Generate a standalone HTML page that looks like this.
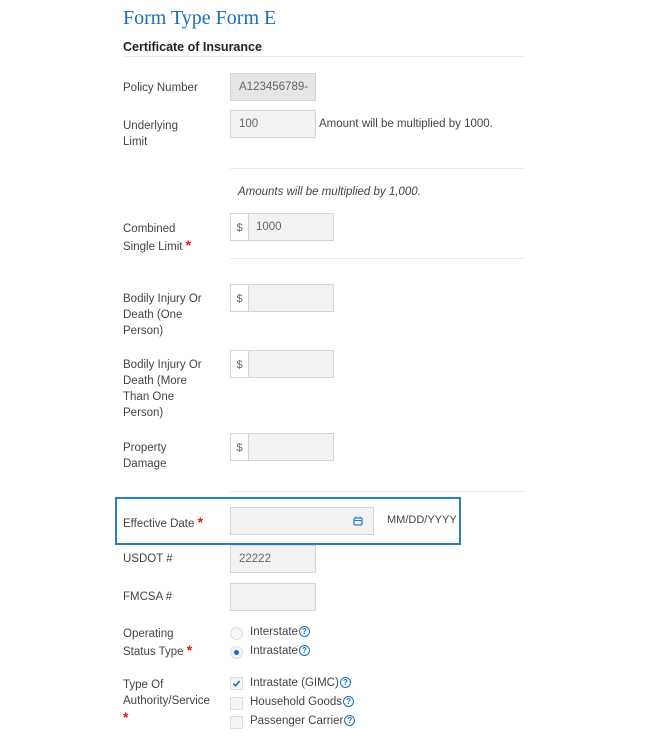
<!DOCTYPE html>
<html><head><meta charset="utf-8"><style>
body{margin:0;width:648px;height:744px;background:#fff;position:relative;overflow:hidden;font-family:"Liberation Sans",sans-serif;font-size:11.5px;color:#444}
.a{position:absolute;white-space:nowrap}
.lbl{position:absolute;left:123px;line-height:16px;color:#444}
.in{position:absolute;box-sizing:border-box;border:1px solid #d4d4d4;background:#f2f2f2;color:#666;padding-left:8px;font-size:11.5px;line-height:26px}
.hr{position:absolute;height:1px;background:#ebebeb}
.st{color:#e0141e;font-weight:bold;font-size:14px}
.q{display:inline-block;width:9px;height:9px;border:1.3px solid #1a6fb8;border-radius:50%;font-size:8px;line-height:9px;text-align:center;color:#1a6fb8;font-weight:bold;vertical-align:1px;margin-left:1px}
.cb{position:absolute;left:230px;width:13px;height:13px;box-sizing:border-box;border:1px solid #ddd;background:#f4f4f4}
.ad{position:absolute;box-sizing:border-box;border:1px solid #d4d4d4;height:28px;width:104px;background:#f2f2f2}
.ad span{position:absolute;left:0;top:0;width:17px;height:26px;background:#fff;border-right:1px solid #d4d4d4;text-align:center;line-height:28px;font-size:11px;color:#666}
.ad b{position:absolute;left:25px;top:0;line-height:26px;font-weight:normal;color:#666}
</style></head><body>
<div class="a" style="left:123px;top:7px;font-family:'Liberation Serif',serif;font-size:20px;color:#1a6fb8">Form Type Form E</div>
<div class="a" style="left:123px;top:40px;font-weight:bold;font-size:12.5px;color:#222">Certificate of Insurance</div>
<div class="hr" style="left:123px;top:56px;width:402px"></div>

<div class="lbl" style="top:80px">Policy Number</div>
<div class="in" style="left:230px;top:73px;width:86px;height:28px;background:#e6e6e6;overflow:hidden">A123456789-C</div>
<div class="lbl" style="top:118px">Underlying<br>Limit</div>
<div class="in" style="left:230px;top:110px;width:86px;height:28px">100</div>
<div class="a" style="left:319px;top:118px">Amount will be multiplied by 1000.</div>
<div class="hr" style="left:230px;top:168px;width:295px"></div>

<div class="a" style="left:238px;top:186px;font-style:italic">Amounts will be multiplied by 1,000.</div>
<div class="lbl" style="top:221px">Combined<br>Single Limit <span class="st">*</span></div>
<div class="ad" style="left:230px;top:213px"><span>$</span><b>1000</b></div>
<div class="hr" style="left:230px;top:258px;width:295px"></div>

<div class="lbl" style="top:291px">Bodily Injury Or<br>Death (One<br>Person)</div>
<div class="ad" style="left:230px;top:284px"><span>$</span></div>
<div class="lbl" style="top:357px">Bodily Injury Or<br>Death (More<br>Than One<br>Person)</div>
<div class="ad" style="left:230px;top:350px"><span>$</span></div>
<div class="lbl" style="top:440px">Property<br>Damage</div>
<div class="ad" style="left:230px;top:433px"><span>$</span></div>
<div class="hr" style="left:230px;top:491px;width:295px"></div>

<div class="a" style="left:115px;top:497px;width:346px;height:48px;box-sizing:border-box;border:2px solid #2a7fc4"></div>
<div class="lbl" style="top:514px">Effective Date <span class="st">*</span></div>
<div class="in" style="left:230px;top:507px;width:144px;height:28px"></div>
<svg class="a" style="left:353px;top:516px" width="10" height="10" viewBox="0 0 10 10"><rect x="1" y="2" width="8" height="7" rx="1" fill="none" stroke="#2a7fc4" stroke-width="1.2"/><line x1="1" y1="4.5" x2="9" y2="4.5" stroke="#2a7fc4"/><line x1="3" y1="0.5" x2="3" y2="2.5" stroke="#2a7fc4"/><line x1="7" y1="0.5" x2="7" y2="2.5" stroke="#2a7fc4"/></svg>
<div class="a" style="left:387px;top:514px;font-size:11px">MM/DD/YYYY</div>

<div class="lbl" style="top:551px">USDOT #</div>
<div class="in" style="left:230px;top:545px;width:86px;height:28px">22222</div>
<div class="lbl" style="top:589px">FMCSA #</div>
<div class="in" style="left:230px;top:583px;width:86px;height:28px"></div>

<div class="lbl" style="top:626px">Operating<br>Status Type <span class="st">*</span></div>
<div class="a" style="left:230px;top:627px;width:13px;height:13px;border-radius:50%;border:1px solid #ddd;background:#f6f6f6;box-sizing:border-box"></div>
<div class="a" style="left:250px;top:626px">Interstate<span class="q">?</span></div>
<div class="a" style="left:230px;top:646px;width:13px;height:13px;border-radius:50%;border:1px solid #ddd;background:#f6f6f6;box-sizing:border-box"><div style="position:absolute;left:3px;top:3px;width:5px;height:5px;border-radius:50%;background:#1a6fb8"></div></div>
<div class="a" style="left:250px;top:645px">Intrastate<span class="q">?</span></div>

<div class="lbl" style="top:677px">Type Of<br>Authority/Service<br><span class="st">*</span></div>
<div class="cb" style="top:677px"><svg width="11" height="11" viewBox="0 0 11 11" style="position:absolute;left:0;top:0"><path d="M2.5 5.5 L4.7 7.7 L8.7 3" stroke="#1a6fb8" stroke-width="1.6" fill="none"/></svg></div>
<div class="a" style="left:250px;top:677px">Intrastate (GIMC)<span class="q">?</span></div>
<div class="cb" style="top:697px"></div>
<div class="a" style="left:250px;top:696px">Household Goods<span class="q">?</span></div>
<div class="cb" style="top:716px"></div>
<div class="a" style="left:250px;top:715px">Passenger Carrier<span class="q">?</span></div>
</body></html>
